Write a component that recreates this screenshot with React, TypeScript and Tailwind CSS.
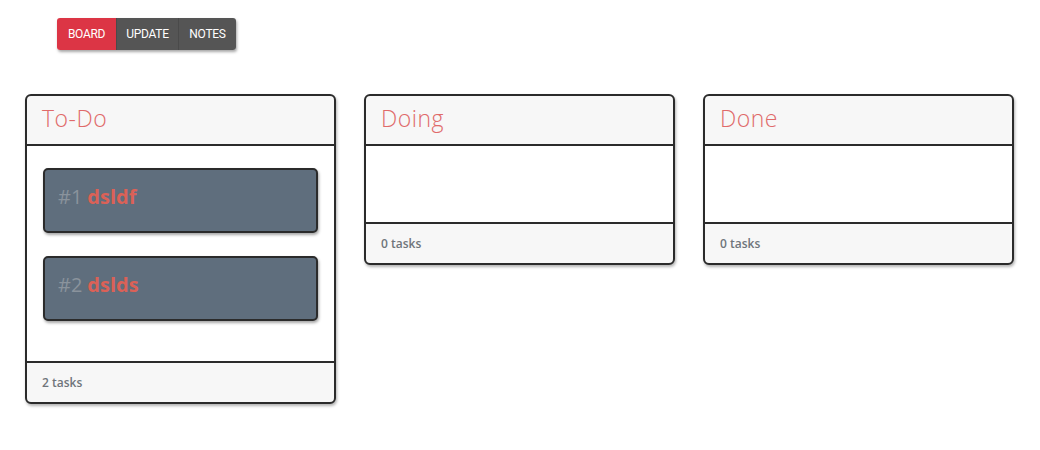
import React from "react";

type Task = { id: number; title: string };

const columns: { name: string; tasks: Task[]; bodyH: string }[] = [
  { name: "To-Do", tasks: [{ id: 1, title: "dsldf" }, { id: 2, title: "dslds" }], bodyH: "h-[217px]" },
  { name: "Doing", tasks: [], bodyH: "h-[78px]" },
  { name: "Done", tasks: [], bodyH: "h-[78px]" },
];

function Column({ name, tasks, bodyH }: { name: string; tasks: Task[]; bodyH: string }) {
  return (
    <div className="w-[311px] border-2 border-[#2b2b2b] rounded-[6px] bg-[#f7f7f7] shadow-[1px_2px_3px_rgba(0,0,0,0.3)] overflow-hidden">
      <div className="h-[50px] flex items-center px-[15px] pb-[4px] border-b-2 border-[#2b2b2b]">
        <span className="text-[23px] font-light text-[#e06a6a] tracking-[0.5px]" style={{ fontFamily: '"Open Sans", "Noto Sans", sans-serif' }}>
          {name}
        </span>
      </div>
      <div className={`${bodyH} bg-white px-[16px] pt-[22px] flex flex-col gap-[23px] border-b-2 border-[#2b2b2b]`}>
        {tasks.map((t) => (
          <div
            key={t.id}
            className="h-[65px] bg-[#5f6e7d] border-2 border-[#2b2b2b] rounded-[5px] shadow-[1px_2px_3px_rgba(0,0,0,0.35)] flex items-center px-[13px] pb-[8px]"
          >
            <span className="text-[20px] text-[#8a939c]" style={{ fontFamily: '"Open Sans", sans-serif' }}>#{t.id}</span>
            <span className="ml-[5px] text-[20px] font-bold text-[#db6157]" style={{ fontFamily: '"Open Sans", sans-serif' }}>{t.title}</span>
          </div>
        ))}
      </div>
      <div className="h-[39px] flex items-center px-[15px]">
        <span className="text-[12px] font-semibold text-[#6f757b]" style={{ fontFamily: '"Open Sans", sans-serif' }}>
          {tasks.length} tasks
        </span>
      </div>
    </div>
  );
}

export default function App() {
  return (
    <div className="w-[1040px] h-[450px] bg-white" style={{ fontFamily: '"Open Sans", sans-serif' }}>
      <div className="pl-[57px] pt-[18px]">
        <div className="inline-flex h-[32px] rounded-[3px] overflow-hidden shadow-[1px_2px_3px_rgba(0,0,0,0.35)]">
          <button className="w-[59px] bg-[#dc3545] text-white text-[12px] tracking-[-0.3px]" style={{ fontFamily: '"Roboto", sans-serif' }}>BOARD</button>
          <button className="w-[62px] bg-[#555555] text-white text-[12px] border-l border-[#4a4a4a] tracking-[-0.3px]" style={{ fontFamily: '"Roboto", sans-serif' }}>UPDATE</button>
          <button className="w-[58px] bg-[#555555] text-white text-[12px] border-l border-[#4a4a4a] tracking-[-0.3px]" style={{ fontFamily: '"Roboto", sans-serif' }}>NOTES</button>
        </div>
      </div>
      <div className="flex items-start gap-[28px] pl-[25px] pt-[44px]">
        {columns.map((c) => (
          <Column key={c.name} {...c} />
        ))}
      </div>
    </div>
  );
}
